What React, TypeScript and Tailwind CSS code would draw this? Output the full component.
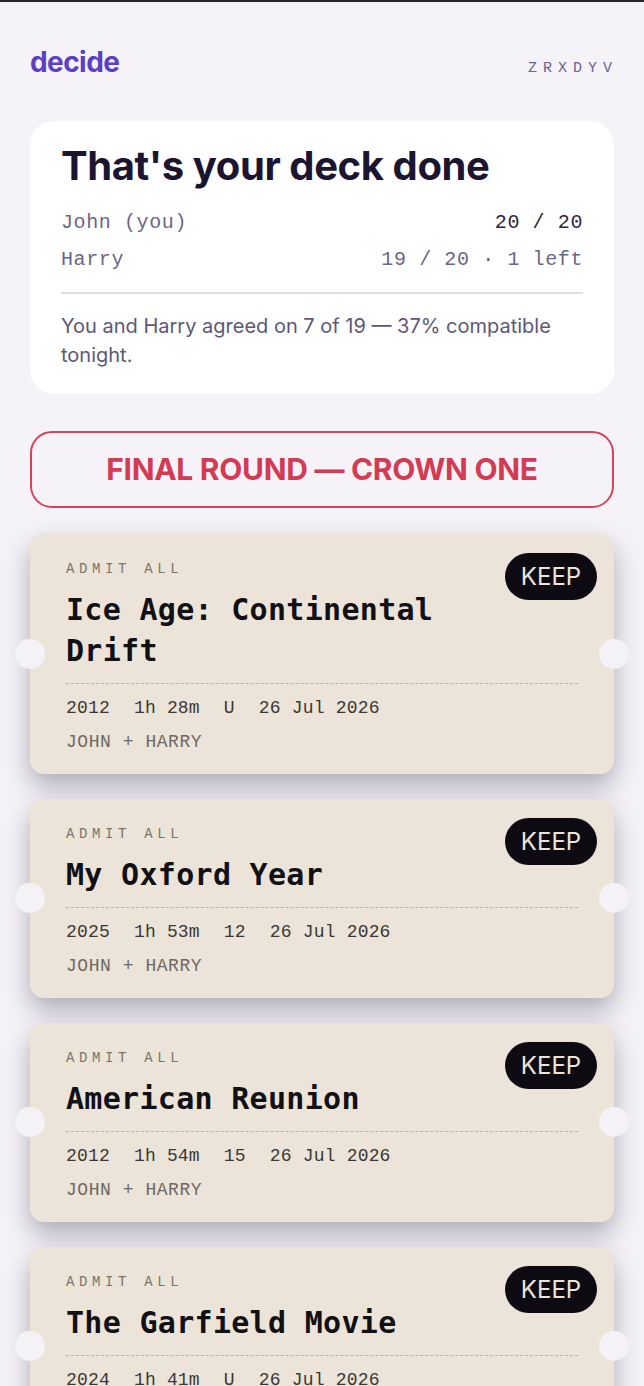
import React from "react";

const mono = "font-['DejaVu_Sans_Mono',monospace]";
const thinMono = "font-['Liberation_Mono',monospace]";
const sans = "font-['Inter',sans-serif]";

type Ticket = {
  title: string;
  year: string;
  runtime: string;
  rating: string;
  date: string;
};

const tickets: Ticket[] = [
  { title: "Ice Age: Continental Drift", year: "2012", runtime: "1h 28m", rating: "U", date: "26 Jul 2026" },
  { title: "My Oxford Year", year: "2025", runtime: "1h 53m", rating: "12", date: "26 Jul 2026" },
  { title: "American Reunion", year: "2012", runtime: "1h 54m", rating: "15", date: "26 Jul 2026" },
  { title: "The Garfield Movie", year: "2024", runtime: "1h 41m", rating: "U", date: "26 Jul 2026" },
];

function TicketCard({ t }: { t: Ticket }) {
  return (
    <div className="relative rounded-[14px] bg-[#ece4d8] px-[36px] pt-[26px] pb-[20px] shadow-[0_12px_26px_rgba(40,35,60,0.35)]">
      {/* notches */}
      <div className="absolute -left-[15px] top-1/2 h-[30px] w-[30px] -translate-y-1/2 rounded-full bg-[#f4f2f7]" />
      <div className="absolute -right-[15px] top-1/2 h-[30px] w-[30px] -translate-y-1/2 rounded-full bg-[#f4f2f7]" />

      <button className={`absolute right-[17px] top-[19px] flex h-[47px] w-[92px] items-center justify-center rounded-full bg-[#0e0a12] pt-[1px] text-[24px] text-[#ece4d8] ${sans}`}>
        KEEP
      </button>

      <div className={`${thinMono} text-[14px] leading-[18px] tracking-[0.33em] text-[#7a746c]`}>ADMIT ALL</div>
      <h2 className={`${mono} mt-[11px] pr-[110px] text-[30px] font-bold leading-[41px] tracking-[0.01em] text-[#111015]`}>{t.title}</h2>
      <div className="mt-[12px] border-t border-dashed border-[#b9b0a3]" />
      <div className={`${thinMono} mt-[12px] flex gap-6 text-[18px] leading-[24px] tracking-[0.01em] text-[#3b3733]`}>
        <span>{t.year}</span>
        <span>{t.runtime}</span>
        <span>{t.rating}</span>
        <span>{t.date}</span>
      </div>
      <div className={`${thinMono} mt-[10px] text-[18px] leading-[24px] tracking-[0.03em] text-[#6e6962]`}>JOHN + HARRY</div>
    </div>
  );
}

export default function App() {
  return (
    <div className="min-h-screen bg-[#f5f3f8]">
      <div className="h-[2px] bg-[#26242a]" />
      <div className="px-[30px]">
        <header className="flex items-baseline justify-between pt-[42px]">
          <div className={`${sans} text-[28px] font-bold leading-[36px] tracking-[-0.02em] text-[#5b3fc4]`}>decide</div>
          <div className={`${thinMono} -mr-[4px] text-[15px] tracking-[0.4em] text-[#6b6390]`}>ZRXDYV</div>
        </header>

        <section className="mt-[40px] rounded-[24px] bg-white px-[31px] pt-[21px] pb-[24px]">
          <h1 className={`${sans} text-[40px] font-bold leading-[48px] tracking-[-0.01em] text-[#1c1530]`}>That's your deck done</h1>
          <div className={`${thinMono} mt-[14px] flex flex-col text-[20px] leading-[37px] tracking-[0.03em]`}>
            <div className="flex justify-between">
              <span className="text-[#6b6685]">John (you)</span>
              <span className="text-[#2b2640]">20 / 20</span>
            </div>
            <div className="flex justify-between">
              <span className="text-[#6b6685]">Harry</span>
              <span className="text-[#6b6685]">19 / 20 · 1 left</span>
            </div>
          </div>
          <div className="mt-[14px] h-[2px] bg-[#dedbea]" />
          <p className={`${sans} mt-[18px] text-[20px] leading-[29px] text-[#5d5878]`}>
            You and Harry agreed on 7 of 19 — 37% compatible tonight.
          </p>
        </section>

        <button className={`mt-[37px] flex h-[77px] w-full items-center justify-center rounded-[22px] border-2 border-[#d6435b] ${sans} text-[30px] font-bold tracking-[-0.01em] text-[#d33b55]`}>
          FINAL ROUND — CROWN ONE
        </button>

        <div className="mt-[26px] flex flex-col gap-[25px] pb-10">
          {tickets.map((t) => (
            <TicketCard key={t.title} t={t} />
          ))}
        </div>
      </div>
    </div>
  );
}
